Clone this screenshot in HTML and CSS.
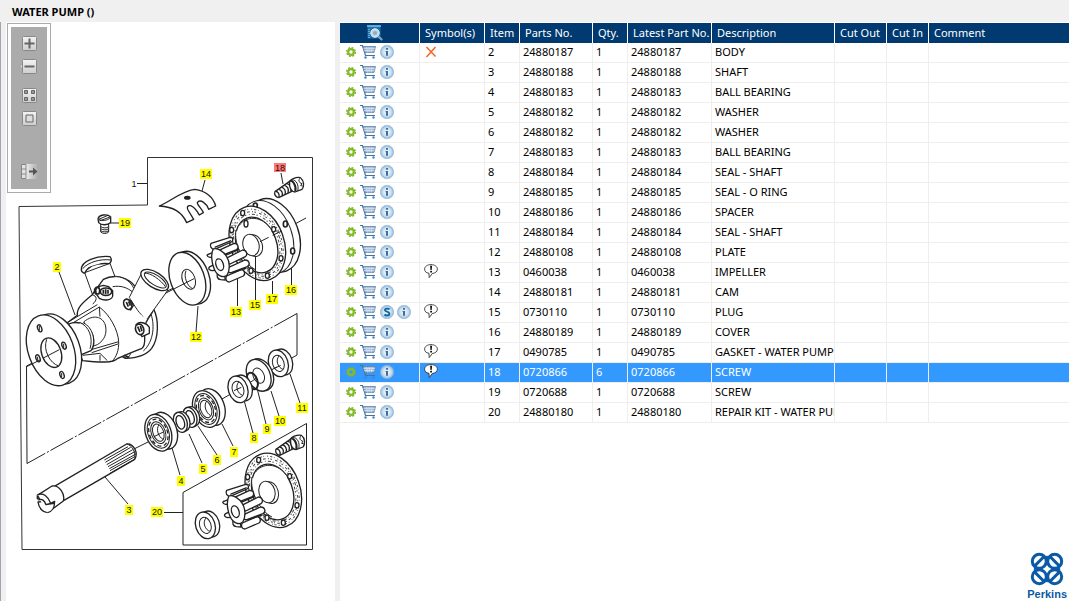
FILE: index.html
```html
<!DOCTYPE html>
<html lang="en">
<head>
<meta charset="utf-8">
<title>WATER PUMP ()</title>
<link rel="stylesheet" href="styles.css">
</head>
<body>
<svg class="sprite" aria-hidden="true">
  <defs>
    <radialGradient id="disc" cx=".5" cy=".5" r=".5"><stop offset="0" stop-color="#eef6fb"/><stop offset=".6" stop-color="#cfe2f0"/><stop offset="1" stop-color="#8fb6d8"/></radialGradient>
    <linearGradient id="key" x1="0" y1="0" x2="0" y2="1"><stop offset="0" stop-color="#f4f4f4"/><stop offset="1" stop-color="#cdcdcd"/></linearGradient>
    <linearGradient id="fade" x1="0" y1="0" x2="1" y2="0"><stop offset="0" stop-color="#ececec"/><stop offset="1" stop-color="#ababab"/></linearGradient>
    <symbol id="gear" viewBox="0 0 10 10"><circle cx="5" cy="5" r="4.3" fill="none" stroke="#7db31f" stroke-width="1.5" stroke-dasharray="1.9 1.477"/><circle cx="5" cy="5" r="2.8" fill="none" stroke="#86b92c" stroke-width="2.2"/></symbol>
    <symbol id="cart" viewBox="0 0 18 16"><path d="M1 1.500H3.500L6.500 11.500H16" fill="none" stroke="#47719f" stroke-width="1.200"/><path d="M4 2.500H16.500L15 8.500H5.800Z" fill="#9db6d3" stroke="#5c83b0" stroke-width=".8"/><path d="M4.500 4.500H16M5 6.500H15.500M7.500 3L8.500 8.500M10.200 3V8.500M13 3L12.200 8.500" fill="none" stroke="#e5edf5" stroke-width=".6"/><circle cx="6.500" cy="13.500" r="1.200" fill="#3f86cc"/><circle cx="14.500" cy="13.500" r="1.200" fill="#3f86cc"/></symbol>
    <symbol id="info" viewBox="0 0 14 14"><circle cx="7" cy="7" r="6.7" fill="url(#disc)" stroke="#91b5d5" stroke-width=".6"/><path d="M6 3h2v1.8H6zM5.6 6H8v4.8H6V7H5.6z" fill="#3f6da3"/></symbol>
    <symbol id="sub" viewBox="0 0 14 14"><circle cx="7" cy="7" r="6.7" fill="url(#disc)" stroke="#91b5d5" stroke-width=".6"/><path d="M9.6 4.4C8.4 3.3 4.9 3.2 5 5.2C5.1 7 9.4 6.4 9.4 8.7C9.4 10.9 5.8 10.8 4.5 9.5" fill="none" stroke="#0b67a0" stroke-width="1.9"/></symbol>
    <symbol id="note" viewBox="0 0 14 15"><path d="M5 9.3C2 9 .6 7.200 .6 5.100C.6 2.500 3.400 .6 7 .6S13.400 2.500 13.400 5.100S11 9.300 8.300 9.500L5.200 13.600Z" fill="#fff" stroke="#333" stroke-width=".9"/><path d="M6.100 1.800H8.100L7.700 6.300H6.500ZM6.200 7.100H8V8.600H6.200Z" fill="#111"/></symbol>
    <symbol id="cross" viewBox="0 0 12 12"><path d="M1.500 1L10.500 10.500M10.500 1L1.500 11" fill="none" stroke="#f26722" stroke-width="1.500"/></symbol>
    <symbol id="find" viewBox="0 0 16 16"><path d="M.5 .5H13.500V13.500H.5Z" fill="#1c70ad"/><path d="M0 1H14" stroke="#7fc2ea" stroke-width="1.500"/><path d="M2 4V13" stroke="#b9dcf0" stroke-dasharray="1 1"/><circle cx="8" cy="8" r="4.200" fill="#bcd6e8" stroke="#edf5fa"/><circle cx="8" cy="8" r="2" fill="#8eaec4"/><path d="M11.500 11.500L15.200 15" stroke="#7da9cb" stroke-width="2"/></symbol>
    <g id="screw">
      <path d="M375 125L422 92L438 118L386 143C376 142 372 132 375 125Z" stroke-width="4"/>
      <path d="M375 125C383 122 391 133 386 143M385 118C394 119 400 128 396 138M394 112C403 113 409 123 405 133M403 106C412 107 418 118 414 129M411 101C420 102 426 113 422 124" stroke-width="4"/>
      <path d="M419 98C417 88 440 80 451 83C463 92 463 110 456 118L435 126C423 125 417 110 419 98Z" stroke-width="4"/>
      <path d="M426 90C438 88 448 106 443 123M451 84C444 90 446 98 456 101L452 107L458 108" />
      <path d="M420 94C426 88 440 105 436 124" stroke-width="6"/>
    </g>
    <g id="gasket">
      <ellipse cx="322" cy="280" rx="80" ry="115" transform="rotate(-20 322 280)" stroke-width="4"/>
      <g class="grain">
        <ellipse cx="321" cy="281" rx="74" ry="107" transform="rotate(-20 321 281)" stroke-dasharray="3 6 7 5 2 9"/>
        <ellipse cx="321" cy="282" rx="70" ry="100" transform="rotate(-20 321 282)" stroke-dasharray="8 7 3 4 5 10"/>
        <ellipse cx="320" cy="283" rx="66" ry="93" transform="rotate(-20 320 283)" stroke-dasharray="2 7 9 5 4 8"/>
      </g>
      <ellipse cx="320" cy="285" rx="60" ry="86" transform="rotate(-20 320 285)" stroke-width="4"/>
      <path d="M268 226C285 200 335 190 368 245M258 240C250 285 285 345 318 360"/>
      <g stroke-width="4"><ellipse cx="278" cy="189" rx="6" ry="8"/><ellipse cx="245" cy="240" rx="6" ry="8"/><ellipse cx="371" cy="238" rx="6" ry="8"/><ellipse cx="393" cy="325" rx="6" ry="8"/><ellipse cx="352" cy="377" rx="6" ry="8"/><ellipse cx="303" cy="362" rx="6" ry="8"/></g>
      <ellipse cx="313" cy="287" rx="24" ry="33" transform="rotate(-15 313 287)"/>
      <ellipse cx="303" cy="285" rx="24" ry="33" transform="rotate(-15 303 285)"/>
    </g>
    <g id="rotor" stroke-width="4">
      <path d="M178 312L205 302L215 320L180 322C170 320 168 314 178 312ZM180 350L200 340L205 360L186 362C176 360 174 354 180 350Z"/>
      <path d="M183 280L240 262C250 262 251 272 244 276L194 298C184 298 178 288 183 280Z"/>
      <path d="M205 302L252 280C264 280 268 292 260 299L222 314C208 316 202 310 205 302Z"/>
      <path d="M228 325L278 300C290 300 294 314 286 320L240 342C228 342 224 332 228 325Z"/>
      <path d="M236 352L285 330C298 330 302 344 292 350L244 368C232 370 230 360 236 352Z"/>
      <path d="M230 378L275 358C284 362 287 372 280 378L238 396C228 396 225 386 230 378Z"/>
      <path d="M203 370L222 368L226 390L212 389C202 388 199 378 203 370Z"/>
      <path d="M226 316L268 298M248 368L288 354M194 292L243 272"/>
      <path d="M190 297C202 292 222 305 230 320C240 335 240 360 232 374C222 386 202 378 194 360C184 340 182 310 190 297Z"/>
      <ellipse cx="209" cy="344" rx="11" ry="18" transform="rotate(-18 209 344)"/>
    </g>
    <g id="bearing">
      <ellipse cx="18" cy="-6" rx="37" ry="57" transform="rotate(-20 18 -6)" stroke-width="4"/>
      <ellipse rx="38" ry="57" transform="rotate(-20)" stroke-width="4"/>
      <ellipse rx="31" ry="48" transform="rotate(-20)"/>
      <ellipse rx="27" ry="42" transform="rotate(-20)" stroke-width="4" stroke-dasharray="12 8"/>
      <ellipse rx="21" ry="34" transform="rotate(-20)"/>
      <ellipse rx="16" ry="27" transform="rotate(-20)"/>
      <path d="M2 -24C-8 -10 0 12 14 20"/>
    </g>
    <g id="collar">
      <ellipse cx="14" cy="-4" rx="28" ry="40" transform="rotate(-18 14 -4)" stroke-width="4"/>
      <ellipse rx="29" ry="41" transform="rotate(-18)" stroke-width="4"/>
      <ellipse rx="17" ry="25" transform="rotate(-18)"/>
      <path d="M2 -22C-10 -8 0 14 14 18"/>
    </g>
    <g id="seal" stroke-width="4">
      <ellipse cx="8" cy="-3" rx="20" ry="30" transform="rotate(-18 8 -3)"/>
      <ellipse rx="20" ry="31" transform="rotate(-18)"/>
      <ellipse rx="12" ry="21" transform="rotate(-18)"/>
    </g>
  </defs>
</svg>

<header class="titlebar"><h1>WATER PUMP ()</h1></header>
<main class="workspace">
  <section class="drawing" aria-label="Exploded view">
    <svg class="plate" viewBox="6 22 329 579" role="img" aria-label="Water pump exploded view">
      <g class="ink">
        <path d="M19 206.500L147.500 205V157.500H312.500V549.500H22Z" class="frame"/>
        <path d="M183 492.500L306.500 423.500V545H183Z"/>
        <path d="M137 183.500H147"/>
        <path class="axis" d="M297 313.500L27 463.500"/>
        <path d="M297 313.500V355L290 359M27 463.500L26.500 366L38 360"/>
        <path class="axis" d="M260 243L306 218M128 452L152 440M222 399L236 391"/>
      </g>
      <g class="ink zoomed" transform="translate(10 240) scale(.33333)">
        <path d="M430 205C448 240 446 295 425 325C408 347 380 354 346 355L250 300L330 130C380 125 415 165 430 205Z" stroke-width="4"/>
        <path d="M420 215C436 250 432 305 400 333M340 345C345 357 356 357 362 340"/>
        <path d="M224 98L250 170L330 150L300 70Z"/>
        <path d="M214 90C212 62 262 46 300 50C307 58 303 66 298 71C262 68 234 78 224 100C218 98 214 94 214 90Z" stroke-width="4"/>
        <path d="M218 86C236 66 270 56 303 60"/>
        <path d="M202 226C200 205 215 190 246 165L280 118C315 100 355 112 378 142L430 210C425 225 408 238 404 260V290C405 310 400 322 396 325C370 335 345 345 322 356C310 370 270 368 218 362L170 250Z" stroke-width="4"/>
        <path d="M308 140C332 136 352 142 370 158M246 165C262 166 262 182 248 192M310 110C335 108 360 120 372 146"/>
        <path d="M168 250L262 194M180 254L268 201L270 230M268 201C300 225 324 270 326 305C327 330 320 350 306 364M326 305L240 330M324 312L245 338M218 346L270 340L292 362M270 345V362" />
        <path d="M222 245C250 222 278 230 286 255C292 280 284 300 262 314L240 322Z"/>
        <path d="M176 252C200 242 225 250 238 268C256 290 254 318 243 332L200 350Z" stroke-width="4"/>
        <path d="M208 247C238 258 250 295 240 326M220 248C248 262 258 300 246 326"/>
        <path d="M393 103L358 172C370 190 390 230 412 236L474 150Z"/>
        <path d="M362 170C372 180 400 226 410 236" stroke="#fff" stroke-width="8"/>
        <ellipse cx="434" cy="120" rx="47" ry="23" transform="rotate(33 434 120)" stroke-width="4"/>
        <ellipse cx="436" cy="120" rx="38" ry="15" transform="rotate(33 436 120)"/>
        <path d="M403 100C420 96 455 122 466 140M470 154L540 120" />
        <path d="M258 142C250 148 252 162 262 166L268 175C285 184 306 180 308 168V152L296 140L280 136Z" stroke-width="4"/>
        <g stroke-width="5"><ellipse cx="288" cy="155" rx="17" ry="11"/><ellipse cx="263" cy="152" rx="6" ry="10"/></g>
        <path d="M342 183C348 172 364 178 370 196L362 210ZM378 254C392 240 412 252 418 262V280L396 290Z" stroke-width="4"/>
        <g stroke-width="5"><ellipse cx="353" cy="193" rx="11" ry="16" transform="rotate(-25 353 193)"/><ellipse cx="389" cy="268" rx="12" ry="16" transform="rotate(-20 389 268)"/></g>
        <path d="M280 149V161M287 148V162M294 149V161M349 186L355 200M356 184L361 197M383 260L390 276M391 258L396 274M342 346L358 352" stroke-width="5"/>
        <ellipse cx="141" cy="327" rx="68" ry="109" transform="rotate(-20 141 327)" stroke-width="4"/>
        <ellipse cx="123" cy="331" rx="68" ry="110" transform="rotate(-20 123 331)" stroke-width="4"/>
        <ellipse cx="124" cy="338" rx="29" ry="46" transform="rotate(-20 124 338)" stroke-width="4"/>
        <path d="M110 298C98 330 120 370 146 378"/>
        <g stroke-width="4"><ellipse cx="89" cy="265" rx="6" ry="11" transform="rotate(-20 89 265)"/><ellipse cx="162" cy="317" rx="6" ry="11" transform="rotate(-20 162 317)"/><ellipse cx="84" cy="355" rx="6" ry="11" transform="rotate(-20 84 355)"/><ellipse cx="156" cy="405" rx="6" ry="11" transform="rotate(-20 156 405)"/></g>
        <path d="M88 258V272M161 311V324M83 350V362M155 399V412M50 380L90 360M100 354L148 329"/>
      </g>
      <g class="ink zoomed" transform="translate(10 150) scale(.33333)">
        <path d="M272 218V246C279 252 290 252 296 246V218ZM272 230C280 235 290 235 296 230M272 236C280 241 290 241 296 236M272 242C280 247 290 247 296 242"/>
        <path d="M264 207C266 194 292 190 302 201V217C294 226 274 227 266 218Z" stroke-width="4"/>
        <path d="M266 208L294 196M268 213L300 201M266 208C276 214 292 212 302 203"/>
      </g>
      <g class="ink zoomed" transform="translate(150 150) scale(.33333)">
        <path d="M28 168C60 155 100 120 135 118C165 122 190 140 197 168L176 178C170 160 150 145 142 158C142 165 158 180 160 188L148 195C142 185 135 172 122 167C112 165 110 172 114 180L131 208L110 218C98 190 70 170 28 168Z" stroke-width="4"/>
        <ellipse cx="112" cy="143" rx="7" ry="3" stroke-width="6"/>
        <ellipse cx="126" cy="383" rx="51" ry="82" transform="rotate(-20 126 383)" stroke-width="4"/>
        <ellipse cx="112" cy="386" rx="51" ry="82" transform="rotate(-20 112 386)" stroke-width="4"/>
        <ellipse cx="116" cy="388" rx="19" ry="31" transform="rotate(-20 116 388)"/>
        <path d="M108 362C100 380 112 408 126 415M46 430L132 386M176 358L194 350"/>
        <path d="M178 352L188 348L194 358L182 362Z" fill="#555"/>
        <ellipse cx="370" cy="256" rx="76" ry="114" transform="rotate(-20 370 256)" stroke-width="4"/>
        <ellipse cx="350" cy="262" rx="76" ry="114" transform="rotate(-20 350 262)"/>
        <g stroke-width="5"><ellipse cx="316" cy="166" rx="6" ry="7"/><ellipse cx="406" cy="222" rx="6" ry="9"/><ellipse cx="428" cy="303" rx="6" ry="9"/></g>
        <use href="#gasket"/>
        <ellipse cx="288" cy="221" rx="6" ry="10" stroke-width="4"/>
        <path d="M330 275L356 262M368 256L396 243"/>
        <use href="#rotor"/>
        <use href="#screw"/>
      </g>
      <g class="ink zoomed" transform="translate(130 310) scale(.33333)">
        <use href="#collar" x="445" y="160"/>
        <ellipse cx="393" cy="194" rx="35" ry="50" transform="rotate(-25 393 194)" stroke-width="4"/>
        <ellipse cx="386" cy="196" rx="34" ry="50" transform="rotate(-25 386 196)" stroke-width="4"/>
        <ellipse cx="386" cy="197" rx="16" ry="24" transform="rotate(-25 386 197)"/>
        <ellipse class="open" cx="367" cy="213" rx="15" ry="26" transform="rotate(-20 367 213)" stroke-width="6"/>
        <path d="M360 218L378 205M424 180L440 171M300 246L322 236"/>
        <use href="#collar" x="324" y="238"/>
        <use href="#bearing" x="228" y="297"/>
        <use href="#seal" x="180" y="322"/>
        <use href="#seal" x="151" y="337"/>
        <use href="#bearing" x="85" y="368"/>
        <path d="M72 380L100 366M312 242L334 232M432 176L452 166"/>
      </g>
      <g class="ink zoomed" transform="translate(10 420) scale(.33333)">
        <path d="M128 202L350 72C372 70 386 100 374 118L162 241Z" stroke-width="4"/>
        <path d="M283 120L354 80M286 127L362 82M290 134L368 89M294 140L374 95M298 146L378 102M300 152L376 109M300 160L374 118M350 72C366 76 378 95 374 118" stroke-width="3"/>
        <path d="M82 226L126 198C148 194 166 222 160 243L114 277C98 280 86 262 84 246L104 244L82 236Z" stroke-width="4"/>
        <path d="M82 226C98 214 116 232 122 250L134 244C134 262 126 276 112 278M84 240C96 234 104 242 108 254L122 250M108 254L132 250M84 228L90 240" stroke-width="4"/>
      </g>
      <g class="ink zoomed" transform="translate(160 420) scale(.33333)">
        <use href="#gasket" x="18" y="-69"/>
        <use href="#rotor" x="17" y="-69"/>
        <use href="#screw" x="-27" y="-37"/>
        <use href="#collar" x="136" y="316"/>
      </g>
      <path class="leader" d="M59 272L75 315M110 223H119M205 180L202 191M281 173L283 184M291.500 285V268M272.500 294V281M255.500 300V257M237.500 306V279M196 332L198 306M300 403L290 374M279 416L271 391M266 424L257.500 390M253 433L244.500 402M233 446L222 424M217 455L198 426M202 463L189 434M180 475L172 448M128 504L105 477M164 512.500H183"/>
      <g class="tags">
        <path d="M200 169h12v10h-12zM119 218h12v10h-12zM53 262h8v10h-8zM285 285h12v10h-12zM266 294h12v10h-12zM249 300h12v10h-12zM230 307h12v10h-12zM190 332h12v10h-12zM296 403h12v10h-12zM274 416h12v10h-12zM263 424h8v10h-8zM250 433h8v10h-8zM230 447h8v10h-8zM213 455h8v10h-8zM199 464h8v10h-8zM177 476h8v10h-8zM125 505h8v10h-8zM151 507h12v10h-12z"/>
        <path class="picked" d="M274 163h12v9h-12z"/>
      </g>
      <g class="numbers">
        <text x="134" y="187">1</text><text x="206" y="177">14</text><text x="280" y="171">18</text><text x="125" y="226">19</text><text x="57" y="270">2</text><text x="291" y="293">16</text><text x="272" y="302">17</text><text x="255" y="308">15</text><text x="236" y="315">13</text><text x="196" y="340">12</text><text x="302" y="411">11</text><text x="280" y="424">10</text><text x="267" y="432">9</text><text x="254" y="441">8</text><text x="234" y="455">7</text><text x="217" y="463">6</text><text x="203" y="472">5</text><text x="181" y="484">4</text><text x="129" y="513">3</text><text x="157" y="515">20</text>
      </g>
    </svg>
    <div class="toolbox">
      <div class="tools">
        <button aria-label="Zoom in"><svg viewBox="0 0 20 15"><path d="M16 4L19 7.500L16 11Z" fill="#ddd" stroke="#888" stroke-width=".5"/><rect x="3.500" y=".5" width="14" height="14" rx="1" fill="url(#key)" stroke="#888"/><path d="M5.500 7.500H15.500M10.500 2.500V12.500" stroke="#666" stroke-width="2"/></svg></button>
        <button aria-label="Zoom out"><svg viewBox="0 0 20 15"><path d="M4 4L1 7.500L4 11Z" fill="#ddd" stroke="#888" stroke-width=".5"/><rect x="3.500" y=".5" width="14" height="14" rx="1" fill="url(#key)" stroke="#888"/><path d="M5.500 7.500H15.500" stroke="#666" stroke-width="2"/></svg></button>
        <button class="group" aria-label="Fit to window"><svg viewBox="0 0 20 15"><rect x="3.500" y=".5" width="14" height="14" rx="1" fill="url(#key)" stroke="#888"/><path d="M5.500 2.500h3v3h-3zM12.500 2.500h3v3h-3zM5.500 9.500h3v3h-3zM12.500 9.500h3v3h-3z" fill="#999" stroke="#666"/></svg></button>
        <button aria-label="Actual size"><svg viewBox="0 0 20 15"><rect x="3.500" y=".5" width="14" height="14" rx="1" fill="url(#key)" stroke="#888"/><path d="M7 4h7v7h-7z" fill="#ddd" stroke="#666"/></svg></button>
        <button class="last" aria-label="Move toolbar"><svg viewBox="0 0 20 15"><rect x="7" width="12" height="15" fill="url(#fade)"/><path d="M2.500 .5H7V14.500H2.500ZM2.500 5H7M2.500 10H7" fill="#e2e2e2" stroke="#777" stroke-width=".8"/><path d="M10 7.500H16" stroke="#555" stroke-width="2"/><path d="M14 3.500L18.500 7.500L14 11.500Z" fill="#555"/></svg></button>
      </div>
    </div>
  </section>

  <section class="parts" aria-label="Parts list">
    <table>
      <colgroup><col class="w-actions"><col class="w-symbols"><col class="w-short"><col class="w-number"><col class="w-short"><col class="w-latest"><col class="w-text"><col class="w-out"><col class="w-in"><col></colgroup>
      <thead><tr><th class="search"><button aria-label="Search parts"><svg class="find"><use href="#find"/></svg></button></th><th>Symbol(s)</th><th>Item</th><th>Parts No.</th><th>Qty.</th><th>Latest Part No.</th><th>Description</th><th>Cut Out</th><th>Cut In</th><th>Comment</th></tr></thead>
      <tbody>
        <tr><td><div class="acts"><button aria-label="Options"><svg class="gear"><use href="#gear"/></svg></button><button aria-label="Add to cart"><svg class="cart"><use href="#cart"/></svg></button><button aria-label="Information"><svg class="info"><use href="#info"/></svg></button></div></td><td><svg class="cross"><use href="#cross"/></svg></td><td>2</td><td>24880187</td><td>1</td><td>24880187</td><td>BODY</td><td></td><td></td><td></td></tr>
        <tr><td><div class="acts"><button aria-label="Options"><svg class="gear"><use href="#gear"/></svg></button><button aria-label="Add to cart"><svg class="cart"><use href="#cart"/></svg></button><button aria-label="Information"><svg class="info"><use href="#info"/></svg></button></div></td><td></td><td>3</td><td>24880188</td><td>1</td><td>24880188</td><td>SHAFT</td><td></td><td></td><td></td></tr>
        <tr><td><div class="acts"><button aria-label="Options"><svg class="gear"><use href="#gear"/></svg></button><button aria-label="Add to cart"><svg class="cart"><use href="#cart"/></svg></button><button aria-label="Information"><svg class="info"><use href="#info"/></svg></button></div></td><td></td><td>4</td><td>24880183</td><td>1</td><td>24880183</td><td>BALL BEARING</td><td></td><td></td><td></td></tr>
        <tr><td><div class="acts"><button aria-label="Options"><svg class="gear"><use href="#gear"/></svg></button><button aria-label="Add to cart"><svg class="cart"><use href="#cart"/></svg></button><button aria-label="Information"><svg class="info"><use href="#info"/></svg></button></div></td><td></td><td>5</td><td>24880182</td><td>1</td><td>24880182</td><td>WASHER</td><td></td><td></td><td></td></tr>
        <tr><td><div class="acts"><button aria-label="Options"><svg class="gear"><use href="#gear"/></svg></button><button aria-label="Add to cart"><svg class="cart"><use href="#cart"/></svg></button><button aria-label="Information"><svg class="info"><use href="#info"/></svg></button></div></td><td></td><td>6</td><td>24880182</td><td>1</td><td>24880182</td><td>WASHER</td><td></td><td></td><td></td></tr>
        <tr><td><div class="acts"><button aria-label="Options"><svg class="gear"><use href="#gear"/></svg></button><button aria-label="Add to cart"><svg class="cart"><use href="#cart"/></svg></button><button aria-label="Information"><svg class="info"><use href="#info"/></svg></button></div></td><td></td><td>7</td><td>24880183</td><td>1</td><td>24880183</td><td>BALL BEARING</td><td></td><td></td><td></td></tr>
        <tr><td><div class="acts"><button aria-label="Options"><svg class="gear"><use href="#gear"/></svg></button><button aria-label="Add to cart"><svg class="cart"><use href="#cart"/></svg></button><button aria-label="Information"><svg class="info"><use href="#info"/></svg></button></div></td><td></td><td>8</td><td>24880184</td><td>1</td><td>24880184</td><td>SEAL - SHAFT</td><td></td><td></td><td></td></tr>
        <tr><td><div class="acts"><button aria-label="Options"><svg class="gear"><use href="#gear"/></svg></button><button aria-label="Add to cart"><svg class="cart"><use href="#cart"/></svg></button><button aria-label="Information"><svg class="info"><use href="#info"/></svg></button></div></td><td></td><td>9</td><td>24880185</td><td>1</td><td>24880185</td><td>SEAL - O RING</td><td></td><td></td><td></td></tr>
        <tr><td><div class="acts"><button aria-label="Options"><svg class="gear"><use href="#gear"/></svg></button><button aria-label="Add to cart"><svg class="cart"><use href="#cart"/></svg></button><button aria-label="Information"><svg class="info"><use href="#info"/></svg></button></div></td><td></td><td>10</td><td>24880186</td><td>1</td><td>24880186</td><td>SPACER</td><td></td><td></td><td></td></tr>
        <tr><td><div class="acts"><button aria-label="Options"><svg class="gear"><use href="#gear"/></svg></button><button aria-label="Add to cart"><svg class="cart"><use href="#cart"/></svg></button><button aria-label="Information"><svg class="info"><use href="#info"/></svg></button></div></td><td></td><td>11</td><td>24880184</td><td>1</td><td>24880184</td><td>SEAL - SHAFT</td><td></td><td></td><td></td></tr>
        <tr><td><div class="acts"><button aria-label="Options"><svg class="gear"><use href="#gear"/></svg></button><button aria-label="Add to cart"><svg class="cart"><use href="#cart"/></svg></button><button aria-label="Information"><svg class="info"><use href="#info"/></svg></button></div></td><td></td><td>12</td><td>24880108</td><td>1</td><td>24880108</td><td>PLATE</td><td></td><td></td><td></td></tr>
        <tr><td><div class="acts"><button aria-label="Options"><svg class="gear"><use href="#gear"/></svg></button><button aria-label="Add to cart"><svg class="cart"><use href="#cart"/></svg></button><button aria-label="Information"><svg class="info"><use href="#info"/></svg></button></div></td><td><svg class="note"><use href="#note"/></svg></td><td>13</td><td>0460038</td><td>1</td><td>0460038</td><td>IMPELLER</td><td></td><td></td><td></td></tr>
        <tr><td><div class="acts"><button aria-label="Options"><svg class="gear"><use href="#gear"/></svg></button><button aria-label="Add to cart"><svg class="cart"><use href="#cart"/></svg></button><button aria-label="Information"><svg class="info"><use href="#info"/></svg></button></div></td><td></td><td>14</td><td>24880181</td><td>1</td><td>24880181</td><td>CAM</td><td></td><td></td><td></td></tr>
        <tr><td><div class="acts"><button aria-label="Options"><svg class="gear"><use href="#gear"/></svg></button><button aria-label="Add to cart"><svg class="cart"><use href="#cart"/></svg></button><button aria-label="Supersession"><svg class="info"><use href="#sub"/></svg></button><button aria-label="Information"><svg class="info"><use href="#info"/></svg></button></div></td><td><svg class="note"><use href="#note"/></svg></td><td>15</td><td>0730110</td><td>1</td><td>0730110</td><td>PLUG</td><td></td><td></td><td></td></tr>
        <tr><td><div class="acts"><button aria-label="Options"><svg class="gear"><use href="#gear"/></svg></button><button aria-label="Add to cart"><svg class="cart"><use href="#cart"/></svg></button><button aria-label="Information"><svg class="info"><use href="#info"/></svg></button></div></td><td></td><td>16</td><td>24880189</td><td>1</td><td>24880189</td><td>COVER</td><td></td><td></td><td></td></tr>
        <tr><td><div class="acts"><button aria-label="Options"><svg class="gear"><use href="#gear"/></svg></button><button aria-label="Add to cart"><svg class="cart"><use href="#cart"/></svg></button><button aria-label="Information"><svg class="info"><use href="#info"/></svg></button></div></td><td><svg class="note"><use href="#note"/></svg></td><td>17</td><td>0490785</td><td>1</td><td>0490785</td><td>GASKET - WATER PUMP</td><td></td><td></td><td></td></tr>
        <tr class="selected"><td><div class="acts"><button aria-label="Options"><svg class="gear"><use href="#gear"/></svg></button><button aria-label="Add to cart"><svg class="cart"><use href="#cart"/></svg></button><button aria-label="Information"><svg class="info"><use href="#info"/></svg></button></div></td><td><svg class="note"><use href="#note"/></svg></td><td>18</td><td>0720866</td><td>6</td><td>0720866</td><td>SCREW</td><td></td><td></td><td></td></tr>
        <tr><td><div class="acts"><button aria-label="Options"><svg class="gear"><use href="#gear"/></svg></button><button aria-label="Add to cart"><svg class="cart"><use href="#cart"/></svg></button><button aria-label="Information"><svg class="info"><use href="#info"/></svg></button></div></td><td></td><td>19</td><td>0720688</td><td>1</td><td>0720688</td><td>SCREW</td><td></td><td></td><td></td></tr>
        <tr><td><div class="acts"><button aria-label="Options"><svg class="gear"><use href="#gear"/></svg></button><button aria-label="Add to cart"><svg class="cart"><use href="#cart"/></svg></button><button aria-label="Information"><svg class="info"><use href="#info"/></svg></button></div></td><td></td><td>20</td><td>24880180</td><td>1</td><td>24880180</td><td>REPAIR KIT - WATER PUMP</td><td></td><td></td><td></td></tr>
      </tbody>
    </table>
    <footer class="brand">
      <svg viewBox="0 0 34 34" aria-hidden="true"><g fill="none" stroke="#0b5aa5" stroke-width="3"><circle cx="9.300" cy="9.300" r="7"/><circle cx="24.700" cy="9.300" r="7"/><circle cx="9.300" cy="24.700" r="7"/><circle cx="24.700" cy="24.700" r="7"/><path d="M4 14.600L14.600 4M19.400 4L30 14.600M4 19.400L14.600 30M19.400 30L30 19.400"/></g><path d="M14 6L17 3.500L20 6L17 9ZM14 28L17 25L20 28L17 30.500ZM6 14L9 17L6 20L3.500 17ZM28 14L25 17L28 20L30.500 17Z" fill="#0b5aa5"/></svg>
      <span>Perkins</span>
    </footer>
  </section>
</main>
</body>
</html>
```
FILE: styles.css
```css
* { box-sizing: border-box; }
body {
  margin: 0;
  min-height: 100vh;
  display: flex;
  flex-direction: column;
  background: #f0f0f0;
  font: 11px/16px "Noto Sans", "Open Sans", sans-serif;
  color: #000;
}
button { padding: 0; border: 0; background: none; display: block; cursor: pointer; }
svg { display: block; }
.sprite { position: absolute; width: 0; height: 0; }

.titlebar { padding: 4px 12px 2px; }
.titlebar h1 { margin: 0; font-size: 11px; line-height: 16px; }

.workspace {
  flex: 1;
  display: flex;
  gap: 5px;
  padding-left: 5px;
  border-left: 1px solid #a5a3b0;
}

.drawing { position: relative; flex: 0 0 329px; background: #fff; }
.plate { width: 100%; }
.ink { fill: none; stroke: #222; stroke-width: 1; stroke-linejoin: round; }
.zoomed { fill: #fff; stroke-width: 3; }
.open { fill: none; }
.grain { fill: none; stroke: #444; stroke-width: 3; }
.frame { stroke: #333; }
.axis { stroke-dasharray: 26 2 2 2; }
.leader { fill: none; stroke: #222; }
.tags { fill: #ff0; }
.picked { fill: #f77; }
.numbers { font: 9px "Liberation Sans", Arial, sans-serif; text-anchor: middle; fill: #111; }

.toolbox {
  position: absolute;
  top: 1px;
  left: 1px;
  padding: 3px;
  border: 1px solid #aaa;
  background: #fff;
}
.tools {
  display: flex;
  flex-direction: column;
  gap: 8px;
  padding: 9px 8px 10px;
  background: #ababab;
}
.tools svg { width: 20px; height: 15px; }
.tools .group { margin-top: 6px; }
.tools .last { margin-top: 30px; }

.parts {
  flex: 1;
  min-width: 0;
  display: flex;
  flex-direction: column;
  justify-content: space-between;
  padding-top: 1px;
  background: #fff;
}
table { width: 100%; table-layout: fixed; border-collapse: separate; border-spacing: 0; }
.w-actions { width: 80px; }
.w-symbols { width: 65px; }
.w-short { width: 35px; }
.w-number { width: 73px; }
.w-latest { width: 84px; }
.w-text { width: 123px; }
.w-out { width: 52px; }
.w-in { width: 42px; }
th, td { height: 20px; padding: 0; overflow: hidden; white-space: nowrap; text-align: left; }
th {
  padding-left: 5px;
  border-right: 1px solid #fff;
  background: #003a70;
  color: #fff;
  font-weight: 400;
}
td { padding: 0 0 2px 3px; border-right: 1px solid #eee; border-bottom: 1px solid #eee; }
th:last-child, td:last-child { border-right: 0; }
.selected td { background: #39f; color: #fff; }
.search { padding-left: 27px; }
.acts { display: flex; align-items: center; gap: 3px; padding-left: 3px; }
.find { width: 16px; height: 16px; }
.gear { width: 10px; height: 10px; }
.cart { width: 18px; height: 16px; }
.info { width: 14px; height: 14px; }
.info + .info { margin-left: 1px; }
.note { width: 14px; height: 15px; margin-left: 1px; }
.cross { width: 12px; height: 12px; margin-left: 2px; }

.brand {
  align-self: flex-end;
  display: flex;
  flex-direction: column;
  align-items: center;
  gap: 2px;
  padding-right: 2px;
  font: bold 11px/13px "Liberation Sans", Arial, sans-serif;
  color: #0b5aa5;
}
.brand svg { width: 34px; height: 34px; }
```
